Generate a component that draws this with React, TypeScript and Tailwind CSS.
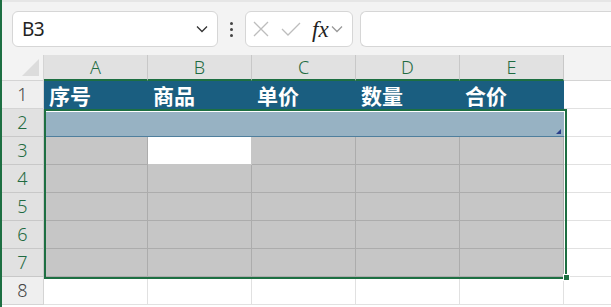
import React from 'react';

const cols = ['A', 'B', 'C', 'D', 'E'];
const heads = ['序号', '商品', '单价', '数量', '合价'];
const cjk = { fontFamily: '"Noto Sans CJK SC", "Noto Sans", sans-serif' };
const ui = { fontFamily: '"Noto Sans", "Liberation Sans", sans-serif' };

function Chevron({ className }: { className?: string }) {
    return (
        <svg width="12" height="8" viewBox="0 0 12 8" className={className}>
            <path d="M1 1.5 L6 6.5 L11 1.5" fill="none" stroke="currentColor" strokeWidth="1.3" />
        </svg>
    );
}

function RowHead({ n, sel }: { n: number; sel: boolean }) {
    return (
        <div
            className={`flex items-center justify-center border-b border-r text-[18px] font-light ${sel ? 'bg-[#e1e1e1] text-[#1f6b41] border-[#c8c8c8]' : 'bg-[#efefef] text-[#444] border-[#d4d4d4]'}`}
            style={ui}
        >
            {n}
        </div>
    );
}

export default function App() {
    return (
        <div className="flex w-[611px] h-[307px] overflow-hidden bg-[#f3f3f3]">
            <div className="w-[2px] shrink-0 bg-[#1d6f42]" />
            <div className="flex-1 flex flex-col min-w-0">
                {/* formula bar */}
                <div className="h-[55px] shrink-0 flex items-center border-t-2 border-[#e6e6e6] pt-[1px]">
                    <div className="ml-[10px] w-[206px] h-[36px] bg-white border border-[#d6d6d6] rounded-[6px] flex items-center justify-between pl-[9px] pr-[9px]">
                        <span className="text-[19px] text-[#222] tracking-[-0.5px]" style={ui}>B3</span>
                        <Chevron className="text-[#333]" />
                    </div>
                    <div className="w-[27px] flex flex-col items-center gap-[3px]">
                        <span className="w-[3px] h-[3px] bg-[#444] rounded-full" />
                        <span className="w-[3px] h-[3px] bg-[#444] rounded-full" />
                        <span className="w-[3px] h-[3px] bg-[#444] rounded-full" />
                    </div>
                    <div className="w-[108px] h-[36px] bg-white border border-[#d6d6d6] rounded-[6px] flex items-center pl-[7px]">
                        <svg width="16" height="16" viewBox="0 0 16 16" className="text-[#bdbdbd]">
                            <path d="M1 1 L15 15 M15 1 L1 15" stroke="currentColor" strokeWidth="1.3" fill="none" />
                        </svg>
                        <svg width="20" height="16" viewBox="0 0 20 16" className="ml-[12px] text-[#bdbdbd]">
                            <path d="M1 8 L7 14 L19 2" stroke="currentColor" strokeWidth="1.3" fill="none" />
                        </svg>
                        <span className="ml-[11px] text-[23px] italic text-[#222] leading-none" style={{ fontFamily: '"Liberation Serif", serif' }}>fx</span>
                        <Chevron className="ml-[2px] text-[#999]" />
                    </div>
                    <div className="ml-[7px] flex-1 h-[36px] bg-white border border-[#d6d6d6] rounded-l-[6px] border-r-0" />
                </div>
                {/* grid */}
                <div className="relative flex-1 bg-white">
                    <div className="grid grid-cols-[42px_104px_104px_104px_104px_104px_1fr] grid-rows-[26px_28px_28px_28px_28px_28px_28px_28px_28px]">
                        {/* corner */}
                        <div className="relative bg-[#f3f3f3] border-r border-b border-[#d4d4d4]">
                            <div className="absolute right-[4px] bottom-[4px] w-0 h-0 border-l-[17px] border-l-transparent border-b-[17px] border-b-[#dcdcdc]" />
                        </div>
                        {cols.map((c) => (
                            <div key={c} className="flex items-center justify-center bg-[#e1e1e1] border-r border-[#c8c8c8] border-b-2 border-b-[#1d6f42] text-[18px] font-light text-[#1f6b41]" style={ui}>
                                {c}
                            </div>
                        ))}
                        <div className="bg-[#f3f3f3] border-b border-[#d4d4d4]" />

                        {/* row 1 */}
                        <RowHead n={1} sel={false} />
                        {heads.map((h) => (
                            <div key={h} className="bg-[#1a5e80] flex items-center pl-[5px] text-white font-bold text-[21px] leading-none" style={cjk}>
                                {h}
                            </div>
                        ))}
                        <div className="border-b border-[#e1e1e1]" />

                        {/* row 2 */}
                        <RowHead n={2} sel />
                        {cols.map((c) => (
                            <div key={c} className="relative bg-[#97b2c3] border-b border-[#4f7f9d]">
                                {c === 'E' && (
                                    <div className="absolute right-[3px] bottom-[2px] w-0 h-0 border-l-[5px] border-l-transparent border-b-[5px] border-b-[#2b3f8a]" />
                                )}
                            </div>
                        ))}
                        <div className="border-b border-[#e1e1e1]" />

                        {/* rows 3-7 */}
                        {[3, 4, 5, 6, 7].map((r) => (
                            <React.Fragment key={r}>
                                <RowHead n={r} sel />
                                {cols.map((c) =>
                                    r === 3 && c === 'B' ? (
                                        <div key={c} className="bg-white border-r border-b border-[#c6c6c6]" />
                                    ) : (
                                        <div key={c} className="bg-[#c6c6c6] border-r border-b border-[#acacac]" />
                                    )
                                )}
                                <div className="border-b border-[#e1e1e1]" />
                            </React.Fragment>
                        ))}

                        {/* row 8 */}
                        <RowHead n={8} sel={false} />
                        {cols.map((c) => (
                            <div key={c} className="bg-white border-r border-b border-[#e1e1e1]" />
                        ))}
                        <div className="border-b border-[#e1e1e1]" />
                    </div>

                    {/* selection outline */}
                    <div className="absolute left-[42px] top-[54px] w-[523px] h-[170px] border-2 border-[#1d6f42] pointer-events-none">
                        <div className="absolute inset-0 border-t border-white" />
                    </div>
                    <div className="absolute left-[561px] top-[219px] w-[7px] h-[7px] bg-[#1d6f42] border border-white" />
                </div>
            </div>
        </div>
    );
}
